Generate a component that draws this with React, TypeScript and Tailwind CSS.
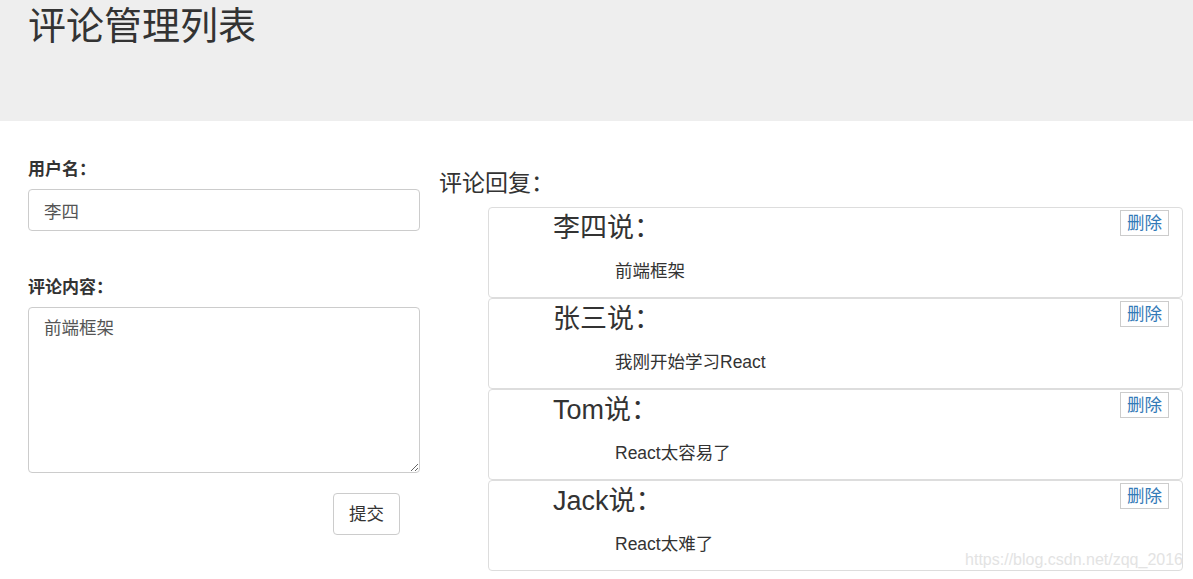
const comments = [
  { id: 1, name: "李四", content: "前端框架" },
  { id: 2, name: "张三", content: "我刚开始学习React" },
  { id: 3, name: "Tom", content: "React太容易了" },
  { id: 4, name: "Jack", content: "React太难了" },
];

function CommentItem({ name, content }: { name: string; content: string }) {
  return (
    <div className="flex h-[91px] items-start justify-between rounded-[4px] border border-[#ddd] bg-white">
      <div className="pl-[64px] pt-[4px]">
        <h3 className="text-[27px] leading-[32px] text-[#333]">{name}说：</h3>
        <p className="ml-[62px] mt-[16px] text-[17.5px] leading-[22px] text-[#333]">
          {content}
        </p>
      </div>
      <button className="mr-[13px] mt-[2px] h-[26px] w-[49px] border border-[#ccc] bg-white text-[17.5px] leading-[22px] text-[#337ab7]">
        删除
      </button>
    </div>
  );
}

export default function App() {
  return (
    <div className="relative h-[579px] overflow-hidden bg-white font-['Liberation_Sans','Noto_Sans_CJK_SC',sans-serif] text-[#333]">
      <div className="h-[121px] bg-[#eee] px-[28px] pt-[5px]">
        <h1 className="text-[38px] font-normal leading-[42px] text-[#333]">评论管理列表</h1>
      </div>
      <div className="flex pl-[28px] pr-[10px]">
        <div className="flex w-[392px] flex-col pt-[39px]">
          <label className="text-[17px] font-bold leading-[20px]">用户名：</label>
          <input
            className="mt-[9px] h-[42px] rounded-[4px] border border-[#ccc] px-[15px] text-[17.5px] text-[#555] outline-none"
            defaultValue="李四"
          />
          <label className="mt-[47px] text-[17px] font-bold leading-[20px]">评论内容：</label>
          <textarea
            className="mt-[9px] h-[166px] rounded-[4px] border border-[#ccc] px-[15px] py-[8px] text-[17.5px] leading-[24px] text-[#555] outline-none"
            defaultValue="前端框架"
          />
          <button className="mr-[20px] mt-[20px] h-[42px] w-[67px] self-end rounded-[4px] border border-[#ccc] bg-white text-[17.5px] text-[#333]">
            提交
          </button>
        </div>
        <div className="ml-[19px] flex-1 pt-[48px]">
          <h4 className="text-[23px] leading-[28px]">评论回复：</h4>
          <div className="ml-[49px] mt-[10px] flex flex-col">
            {comments.map((c) => (
              <CommentItem key={c.id} name={c.name} content={c.content} />
            ))}
          </div>
        </div>
      </div>
      <div className="absolute bottom-[7px] right-[10px] text-[16px] text-[#e3e3e3]">
        https://blog.csdn.net/zqq_2016
      </div>
    </div>
  );
}
